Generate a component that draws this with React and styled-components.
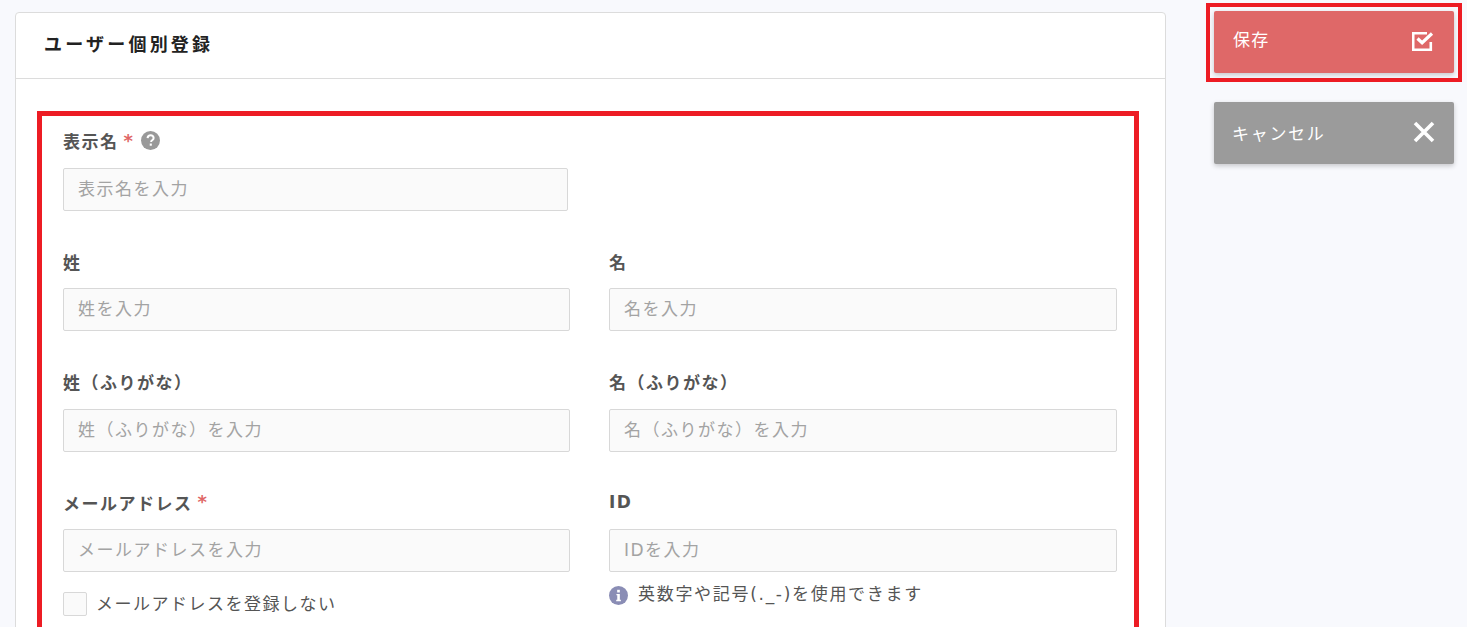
import React from "react";
import styled, { createGlobalStyle } from "styled-components";

const GlobalStyle = createGlobalStyle`
  html, body {
    margin: 0;
    height: 627px;
    overflow: hidden;
    background-color: #f8f9fd;
    font-family: "DejaVu Sans", "Noto Sans CJK JP", sans-serif;
  }
  * {
    box-sizing: border-box;
  }
`;

const Page = styled.div`
  display: flex;
  align-items: flex-start;
  height: 627px;
  padding: 12px 0 0 15px;
  overflow: hidden;
`;

const Card = styled.section`
  width: 1151px;
  height: 800px;
  flex-shrink: 0;
  background-color: #fff;
  border: 1px solid #dcdcdc;
  border-radius: 4px;
`;

const CardHeader = styled.header`
  height: 66px;
  padding: 0 0 6px 28px;
  display: flex;
  align-items: center;
  border-bottom: 1px solid #dcdcdc;
  color: #222;
  font-size: 18px;
  font-weight: 700;
  letter-spacing: 3.2px;
`;

const CardBody = styled.div`
  padding: 32px 26px 0 21px;
`;

const Highlight = styled.div`
  border: 5px solid #ed1c24;
  padding: 13.1px 17px 0 21px;
  height: 700px;
`;

const Row = styled.div`
  display: grid;
  grid-template-columns: ${(p) => (p.$single ? "505px" : "507px 508px")};
  column-gap: 39px;
  margin-bottom: 39px;
`;

const Field = styled.div`
  display: flex;
  flex-direction: column;
`;

const Label = styled.label`
  height: 24px;
  padding-bottom: 1px;
  margin-bottom: 14.5px;
  display: flex;
  align-items: center;
  color: #555;
  font-size: 17px;
  font-weight: 700;
  letter-spacing: 1.5px;
`;

const Required = styled.span`
  margin-left: 5px;
  color: #e06666;
  font-size: 18px;
  line-height: 24px;
`;

const HelpIcon = styled.svg`
  width: 19px;
  height: 19px;
  margin-left: 7px;
`;

const Input = styled.input`
  width: 100%;
  height: 43px;
  padding: 0 14px 1px;
  background-color: #fafafa;
  border: 1px solid #d8d8d8;
  border-radius: 2px;
  color: #555;
  font-family: inherit;
  font-size: 17px;
  letter-spacing: 1.5px;
  outline: none;

  &::placeholder {
    color: #a3a3a3;
    opacity: 1;
  }
`;

const CheckRow = styled.div`
  margin-top: 20px;
  display: flex;
  align-items: center;
  gap: 9px;
  color: #555;
  font-size: 17px;
  letter-spacing: 1.5px;
  line-height: 24px;
`;

const CheckBox = styled.span`
  width: 24px;
  height: 24px;
  background-color: #fafafa;
  border: 1px solid #d8d8d8;
  border-radius: 2px;
`;

const Hint = styled.div`
  margin-top: 10px;
  display: flex;
  align-items: flex-start;
  gap: 10px;
  color: #555;
  font-size: 17px;
  letter-spacing: 1.7px;
  line-height: 24px;
`;

const HintIcon = styled.svg`
  width: 19px;
  height: 19px;
  flex-shrink: 0;
  margin-top: 4px;
`;

const Side = styled.aside`
  margin: -9px 0 0 40px;
  display: flex;
  flex-direction: column;
  align-items: flex-start;
`;

const SaveOutline = styled.div`
  border: 4px solid #ed1c24;
  padding: 4px;
  margin-bottom: 20px;
  background-color: #f8f9fd;
  height: 79px;
  width: 256px;
`;

const ActionButton = styled.button`
  width: 240px;
  height: 62px;
  padding: 0 20px ${(p) => (p.$cancel ? "2px" : "8px")} ${(p) => (p.$cancel ? "18px" : "19px")};
  display: flex;
  align-items: center;
  justify-content: space-between;
  background-color: ${(p) => (p.$cancel ? "#9b9b9b" : "#df6868")};
  border: none;
  border-radius: 2px;
  box-shadow: 0 2px 5px rgba(0, 0, 0, 0.2);
  color: #fff;
  font-family: inherit;
  font-size: 17px;
  letter-spacing: ${(p) => (p.$cancel ? "1.7px" : "1.2px")};
`;

const CancelWrap = styled.div`
  margin-left: 8px;
`;

const SaveIcon = styled.svg`
  width: 22px;
  height: 22px;
  flex-shrink: 0;
  margin-top: 8px;
`;

const CancelIcon = styled.svg`
  width: 22px;
  height: 22px;
  flex-shrink: 0;
  margin-right: -1px;
`;

const TextField = ({ label, placeholder, required, help, hint, check }) => (
  <Field>
    <Label>
      {label}
      {required && <Required>*</Required>}
      {help && (
        <HelpIcon viewBox="0 0 20 20">
          <circle cx="10" cy="10" r="10" fill="#999" />
          <path d="M6.9 7.6c.2-2 1.6-3 3.3-3 1.8 0 3.1 1.1 3.1 2.7 0 1.3-.8 1.9-1.6 2.5-.7.5-1 .8-1 1.6v.3" fill="none" stroke="#fff" strokeWidth="2.1" />
          <rect x="9.2" y="13.2" width="2.2" height="2.3" fill="#fff" />
        </HelpIcon>
      )}
    </Label>
    <Input placeholder={placeholder} />
    {check && (
      <CheckRow>
        <CheckBox />
        <span>{check}</span>
      </CheckRow>
    )}
    {hint && (
      <Hint>
        <HintIcon viewBox="0 0 20 20">
          <circle cx="10" cy="10" r="10" fill="#8a8db5" />
          <rect x="8.6" y="4" width="2.8" height="2.8" fill="#fff" />
          <path d="M7.8 8.4h3.6v6.2h1.1v1.4H7.6v-1.4h1.1V9.8H7.8z" fill="#fff" />
        </HintIcon>
        {hint}
      </Hint>
    )}
  </Field>
);

const App = () => (
  <Page>
    <GlobalStyle />
    <Card>
      <CardHeader>ユーザー個別登録</CardHeader>
      <CardBody>
        <Highlight>
          <Row $single>
            <TextField label="表示名" placeholder="表示名を入力" required help />
          </Row>
          <Row>
            <TextField label="姓" placeholder="姓を入力" />
            <TextField label="名" placeholder="名を入力" />
          </Row>
          <Row>
            <TextField label="姓（ふりがな）" placeholder="姓（ふりがな）を入力" />
            <TextField label="名（ふりがな）" placeholder="名（ふりがな）を入力" />
          </Row>
          <Row>
            <TextField
              label="メールアドレス"
              placeholder="メールアドレスを入力"
              required
              check="メールアドレスを登録しない"
            />
            <TextField
              label="ID"
              placeholder="IDを入力"
              hint="英数字や記号(._-)を使用できます"
            />
          </Row>
        </Highlight>
      </CardBody>
    </Card>
    <Side>
      <SaveOutline>
        <ActionButton>
          保存
          <SaveIcon viewBox="0 0 22 22">
            <path d="M18.8 11v7.8H1.2V2.2H15" fill="none" stroke="#fff" strokeWidth="2.6" />
            <path d="M5.5 7.5l4.6 4.2L20 2.5" fill="none" stroke="#fff" strokeWidth="3.2" />
          </SaveIcon>
        </ActionButton>
      </SaveOutline>
      <CancelWrap>
        <ActionButton $cancel>
          キャンセル
          <CancelIcon viewBox="0 0 22 22">
            <path d="M2 2l18 18M20 2L2 20" fill="none" stroke="#fff" strokeWidth="3.6" />
          </CancelIcon>
        </ActionButton>
      </CancelWrap>
    </Side>
  </Page>
);

export default App;
